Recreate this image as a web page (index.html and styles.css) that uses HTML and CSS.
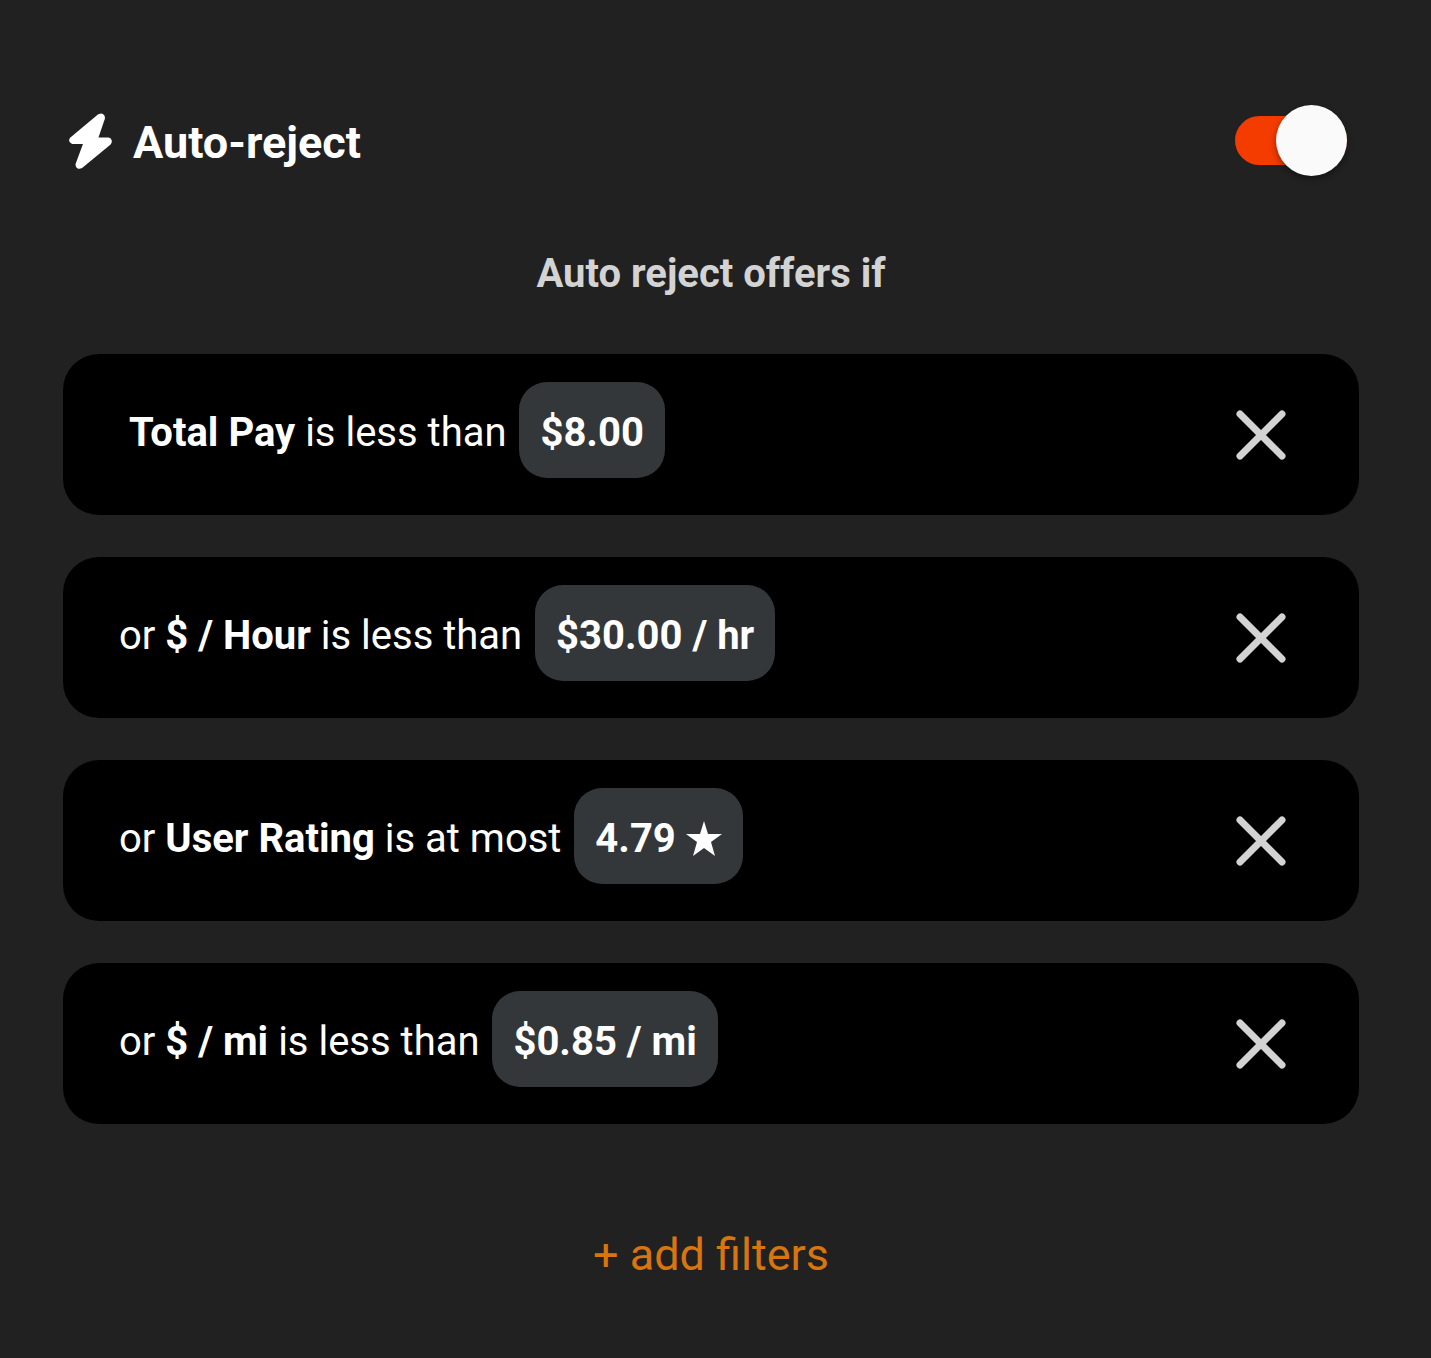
FILE: index.html
```html
<!DOCTYPE html>
<html lang="en">
<head>
<meta charset="utf-8">
<meta name="viewport" content="width=device-width, initial-scale=1">
<title>Auto-reject</title>
<link rel="stylesheet" href="styles.css">
</head>
<body>
<svg class="sprite" aria-hidden="true">
  <symbol id="close" viewBox="0 0 52 52"><path d="M5 5 47 47M47 5 5 47" fill="none" stroke="currentColor" stroke-width="7" stroke-linecap="round"/></symbol>
</svg>
<main class="panel">
  <header class="header">
    <svg class="bolt" viewBox="0 0 44 58" aria-hidden="true"><path d="M31.500 4.500 4 27.500Q3 29 5 29.500H18.500L10 52.500Q10 55 12.500 54L41 30.500Q42 28.500 40 28H27L34.500 6Q34.500 3 31.500 4.500Z" fill="currentColor" stroke="currentColor" stroke-width="5" stroke-linejoin="round"/></svg>
    <h1 class="title"><label for="auto-reject">Auto-reject</label></h1>
    <input class="switch" id="auto-reject" type="checkbox" role="switch" checked>
  </header>
  <h2 class="subtitle">Auto reject offers if</h2>
  <ul class="filters">
    <li class="filter">
      <p class="rule">&nbsp;<strong>Total Pay</strong> is less than <button class="value" type="button">$8.00</button></p>
      <button class="remove" type="button" aria-label="Remove Total Pay"><svg class="icon"><use href="#close"/></svg></button>
    </li>
    <li class="filter">
      <p class="rule">or <strong>$ / Hour</strong> is less than <button class="value" type="button">$30.00 / hr</button></p>
      <button class="remove" type="button" aria-label="Remove $ / Hour"><svg class="icon"><use href="#close"/></svg></button>
    </li>
    <li class="filter">
      <p class="rule">or <strong>User Rating</strong> is at most <button class="value" type="button">4.79 <svg class="star" viewBox="0 0 36 36" role="img" aria-label="stars"><path d="M18 0 22 13H36L25 21 29 35 18 27 7 35 11 21 0 13H14Z" fill="currentColor"/></svg></button></p>
      <button class="remove" type="button" aria-label="Remove User Rating"><svg class="icon"><use href="#close"/></svg></button>
    </li>
    <li class="filter">
      <p class="rule">or <strong>$ / mi</strong> is less than <button class="value" type="button">$0.85 / mi</button></p>
      <button class="remove" type="button" aria-label="Remove $ / mi"><svg class="icon"><use href="#close"/></svg></button>
    </li>
  </ul>
  <button class="add" type="button">+ add filters</button>
</main>
</body>
</html>
```
FILE: styles.css
```css
* { box-sizing: border-box; }
body {
  margin: 0;
  background: #212121;
  color: #fff;
  font-family: Roboto, "Liberation Sans", sans-serif;
  font-size: 40px;
}
button {
  margin: 0;
  padding: 0;
  border: 0;
  background: none;
  color: inherit;
  font: inherit;
  cursor: pointer;
}
.sprite { position: absolute; width: 0; height: 0; }
.panel {
  display: flex;
  flex-direction: column;
  padding: 104px 72px 72px 63px;
}
.header {
  display: flex;
  align-items: center;
  height: 73px;
  padding: 0 12px 0 5px;
}
.bolt { width: 44px; height: 58px; }
.title {
  flex: 1;
  margin: 0 0 0 21px;
  padding-top: 5px;
  font-size: 45px;
  font-weight: 700;
  line-height: 60px;
}
.switch {
  appearance: none;
  display: flex;
  align-items: center;
  justify-content: flex-end;
  width: 112px;
  height: 49px;
  margin: 0;
  border-radius: 25px;
  background: #f43b00;
  cursor: pointer;
}
.switch::before {
  content: "";
  flex: none;
  width: 71px;
  height: 71px;
  border-radius: 50%;
  background: #fafafa;
  box-shadow: 0 3px 6px rgba(0, 0, 0, 0.4);
}
.switch:not(:checked) {
  justify-content: flex-start;
  background: #767577;
}
.subtitle {
  margin: 67px 0 0;
  color: #d3d3d3;
  font-size: 40px;
  font-weight: 700;
  line-height: 60px;
  text-align: center;
}
.filters {
  display: flex;
  flex-direction: column;
  gap: 42px;
  margin: 50px 0 0;
  padding: 0;
  list-style: none;
}
.filter {
  display: flex;
  align-items: center;
  justify-content: space-between;
  padding: 0 72px 0 56px;
  border-radius: 36px;
  background: #000;
}
.rule {
  margin: 28px 0 37px;
  padding-top: 6px;
  line-height: 90px;
}
.value {
  height: 96px;
  margin: -6px 0 0 3px;
  padding: 6px 21px 0;
  border-radius: 28px;
  background: #343739;
  font-weight: 700;
  line-height: 90px;
  vertical-align: top;
}
.star { width: 36px; height: 36px; vertical-align: -5px; }
.remove { display: flex; color: #d3d3d3; }
.icon { width: 52px; height: 52px; }
.add {
  align-self: center;
  margin: 101px 0 0;
  color: #d9750f;
  font-size: 45px;
  line-height: 60px;
}
```
